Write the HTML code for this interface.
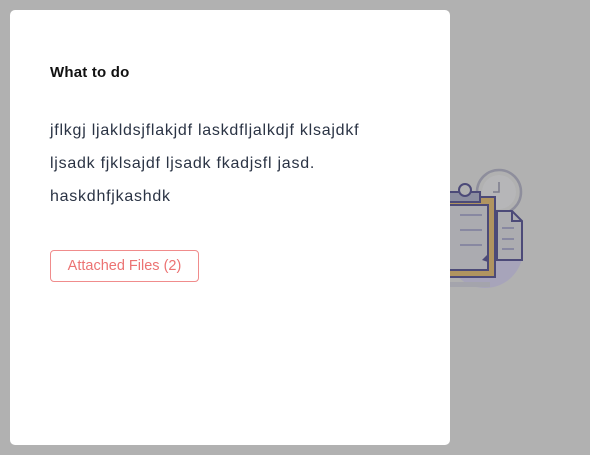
<!DOCTYPE html>
<html><head><style>
body{margin:0;width:590px;height:455px;background:#b1b1b1;position:relative;overflow:hidden;font-family:"Liberation Sans",sans-serif}
.card{position:absolute;left:10px;top:10px;width:440px;height:435px;background:#fff;border-radius:5px}
h3{position:absolute;left:40px;top:54px;margin:0;font-size:15px;font-weight:bold;color:#111;letter-spacing:0.2px}
.p{position:absolute;left:40px;top:104px;width:330px;font-size:16px;line-height:33px;color:#2a3344;letter-spacing:0.75px}
.btn{position:absolute;left:40px;top:240px;width:147px;height:30px;border:1px solid #f08c8c;border-radius:4px;color:#ec7373;font-size:14.5px;line-height:30px;text-align:center}
</style></head><body>
<svg style="position:absolute;left:440px;top:150px" width="100" height="150">
<ellipse cx="45" cy="100" rx="38" ry="38" fill="#a7a4ba"/>
<circle cx="59" cy="42" r="22" fill="#b1b1b1" stroke="#8e8e9c" stroke-width="2.5"/>
<circle cx="59" cy="42" r="17" fill="#b6b6b8"/>
<path d="M59 32v10h-6" stroke="#7c7c8c" stroke-width="1.5" fill="none"/>
<path d="M57 61h15l10 10v39H57z" fill="#acacb0" stroke="#4c4a78" stroke-width="2"/>
<path d="M72 61v10h10" fill="none" stroke="#4c4a78" stroke-width="2"/>
<path d="M62 78h12M62 89h12M62 99h12" stroke="#7c7c9c" stroke-width="1.5"/>
<rect x="0" y="47" width="55" height="80" fill="#b09460" stroke="#4c4a78" stroke-width="2"/>
<rect x="0" y="55" width="48" height="65" fill="#ababb0" stroke="#4c4a78" stroke-width="2"/>
<rect x="0" y="42" width="40" height="10" fill="#8c8ea0" stroke="#4c4a78" stroke-width="2"/>
<circle cx="25" cy="40" r="6" fill="#b1b1b1" stroke="#4c4a78" stroke-width="2"/>
<path d="M20 65h22M20 80h22M20 95h22" stroke="#7c7c9c" stroke-width="1.5"/>
<path d="M0 65l6-4M0 80l6-4" stroke="#3a8a5a" stroke-width="2"/>
<path d="M42 110l6-6v8z" fill="#4c4a78"/>
<rect x="0" y="132" width="50" height="5" fill="#a4a4ac"/>
</svg>
<div class="card">
<h3>What to do</h3>
<div class="p">jflkgj ljakldsjflakjdf laskdfljalkdjf klsajdkf<br>ljsadk fjklsajdf ljsadk fkadjsfl jasd.<br>haskdhfjkashdk</div>
<div class="btn">Attached Files (2)</div>
</div>
</body></html>
